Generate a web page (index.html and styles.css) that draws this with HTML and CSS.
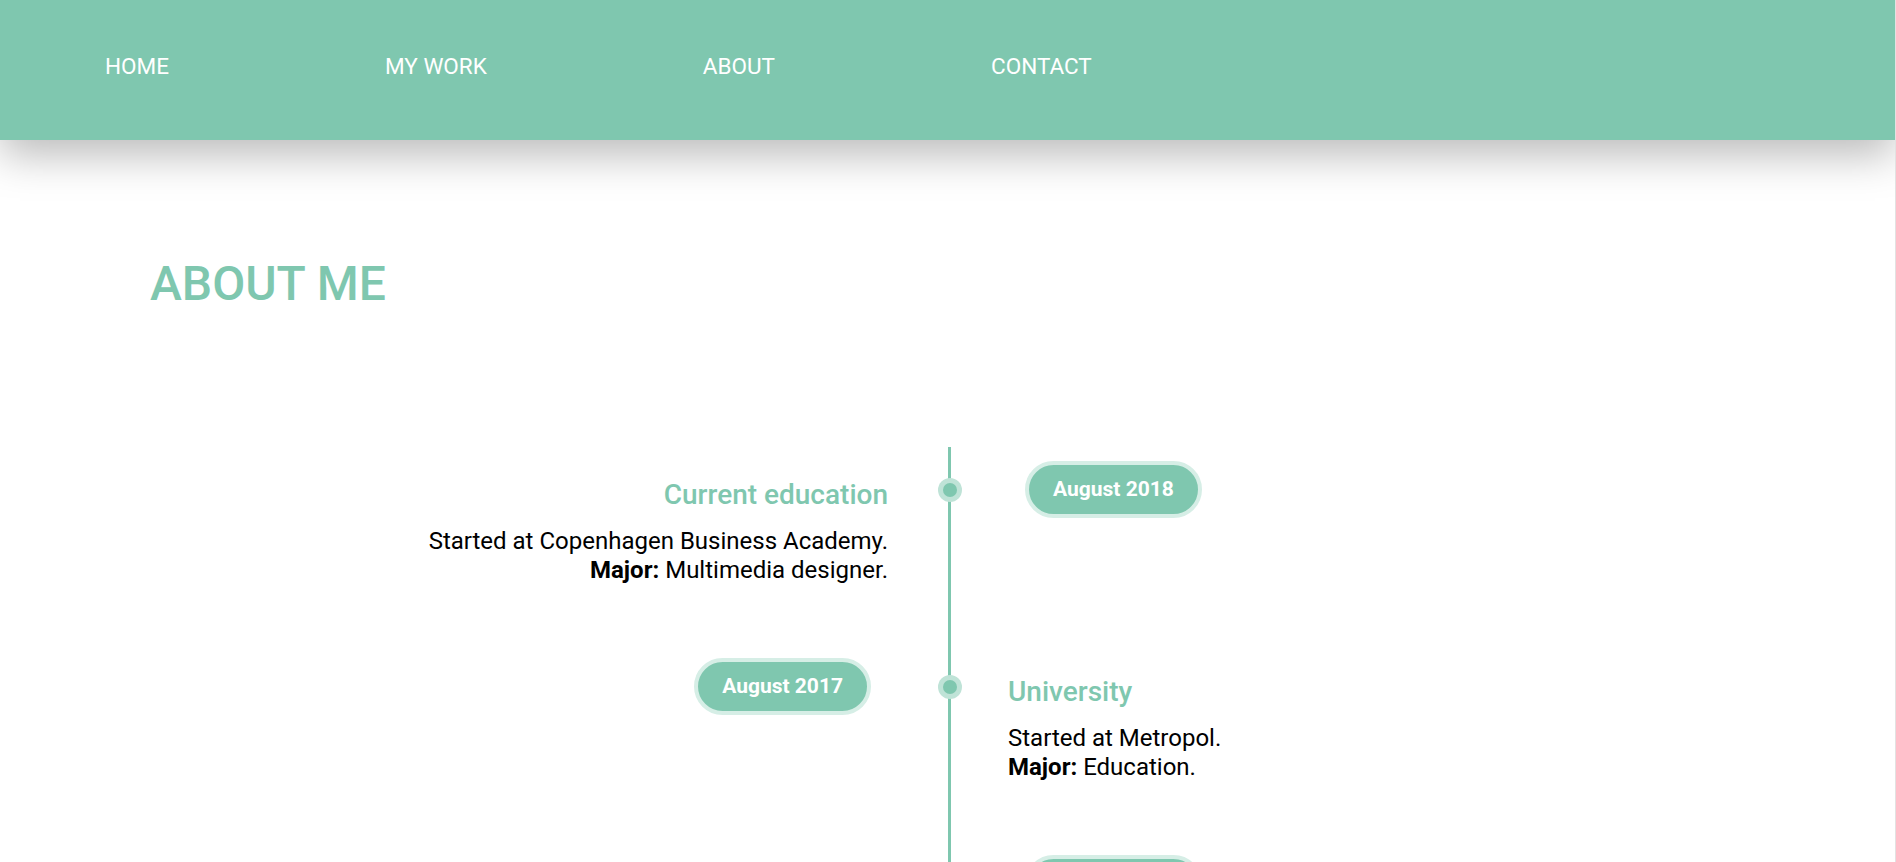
FILE: index.html
```html
<!DOCTYPE html>
<html lang="en">
<head>
<meta charset="utf-8">
<title>About me</title>
<link rel="stylesheet" href="styles.css">
</head>
<body>
<header class="site-header">
  <nav class="nav">
    <a class="nav-link" href="#">HOME</a>
    <a class="nav-link" href="#">MY WORK</a>
    <a class="nav-link" href="#">ABOUT</a>
    <a class="nav-link" href="#">CONTACT</a>
  </nav>
</header>
<main class="about">
  <h1 class="about-title">ABOUT ME</h1>
  <div class="timeline">
    <div class="tl-cell tl-left tl-entry">
      <div class="tl-text">
        <h2 class="tl-title">Current education</h2>
        <p class="tl-body">Started at Copenhagen Business Academy.<br><strong>Major:</strong> Multimedia designer.</p>
      </div>
    </div>
    <div class="tl-axis"><span class="tl-dot"></span></div>
    <div class="tl-cell tl-right tl-when"><span class="tl-date">August 2018</span></div>

    <div class="tl-cell tl-left tl-when"><span class="tl-date">August 2017</span></div>
    <div class="tl-axis"><span class="tl-dot"></span></div>
    <div class="tl-cell tl-right tl-entry">
      <div class="tl-text">
        <h2 class="tl-title">University</h2>
        <p class="tl-body">Started at Metropol.<br><strong>Major:</strong> Education.</p>
      </div>
    </div>

    <div class="tl-cell tl-left tl-entry">
      <div class="tl-text">
        <h2 class="tl-title">High school</h2>
        <p class="tl-body">Graduated from gymnasium.<br><strong>Line:</strong> Science.</p>
      </div>
    </div>
    <div class="tl-axis"><span class="tl-dot"></span></div>
    <div class="tl-cell tl-right tl-when"><span class="tl-date">August 2014</span></div>
  </div>
</main>
</body>
</html>
```

FILE: styles.css
```css
* {
  box-sizing: border-box;
}

html {
  background: #fff;
}

body {
  margin: 0;
  font-family: Roboto, "Noto Sans", sans-serif;
  color: #000;
  border-right: 1px solid #e2e2e2;
  min-height: 100vh;
}

.site-header {
  height: 140px;
  background: #7fc7af;
  box-shadow: 0 15px 40px rgba(0, 0, 0, 0.27);
  position: relative;
  z-index: 1;
}

.nav {
  display: flex;
  gap: 216px;
  padding: 53px 0 0 105px;
}

.nav-link {
  color: #fff;
  text-decoration: none;
  font-size: 22.5px;
  line-height: 26px;
}

.about-title {
  margin: 0;
  padding: 115px 0 0 150px;
  font-size: 48px;
  font-weight: 500;
  color: #7fc7af;
  line-height: normal;
}

.timeline {
  display: grid;
  grid-template-columns: 1fr 3px 1fr;
  grid-auto-rows: 197px;
  margin-top: 135px;
  padding-left: 4px;
}

.tl-axis {
  background: #7fc7af;
  position: relative;
}

.tl-dot {
  position: absolute;
  left: 50%;
  top: 43px;
  width: 14px;
  height: 14px;
  margin: -7px 0 0 -7px;
  border-radius: 50%;
  background: #7fc7af;
  box-shadow: 0 0 0 5px #bfe3d7;
}

.tl-cell {
  display: flex;
  align-items: flex-start;
}

.tl-left {
  justify-content: flex-end;
  text-align: right;
}

.tl-right {
  justify-content: flex-start;
  text-align: left;
}

.tl-left.tl-entry {
  padding-right: 60px;
}

.tl-right.tl-entry {
  padding-left: 57px;
}

.tl-left.tl-when {
  padding-right: 77px;
}

.tl-right.tl-when {
  padding-left: 74px;
}

.tl-text {
  padding-top: 31px;
}

.tl-title {
  margin: 0 0 16px;
  font-size: 28px;
  font-weight: 500;
  color: #7fc7af;
  line-height: normal;
}

.tl-body {
  margin: 0;
  font-size: 24px;
  line-height: 1.2;
}

.tl-body strong {
  font-weight: 700;
}

.tl-date {
  display: inline-block;
  margin-top: 14px;
  padding: 12px 24px;
  line-height: 25px;
  font-size: 21px;
  font-weight: 700;
  color: #fff;
  background: #7fc7af;
  border: 4px solid #d6eee6;
  border-radius: 999px;
  white-space: nowrap;
}
```
